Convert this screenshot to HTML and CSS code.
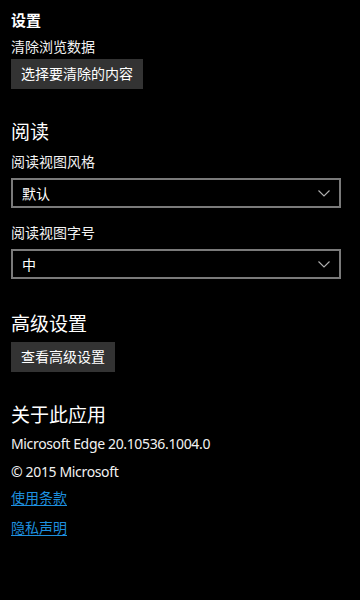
FILE: index.html
```html
<!DOCTYPE html>
<html lang="zh-CN">
<head>
<meta charset="utf-8">
<title>设置</title>
<link rel="stylesheet" href="styles.css">
</head>
<body>
<main class="page">
  <div class="title">设置</div>
  <div class="label first">清除浏览数据</div>
  <button class="btn">选择要清除的内容</button>

  <h2 class="heading">阅读</h2>
  <div class="label">阅读视图风格</div>
  <div class="select">
    <span>默认</span>
    <svg class="chev" width="12" height="7" viewBox="0 0 12 7"><path d="M0.5 0.5 L6 6 L11.5 0.5" fill="none" stroke="#b0b0b0" stroke-width="1.1"/></svg>
  </div>
  <div class="label second">阅读视图字号</div>
  <div class="select">
    <span>中</span>
    <svg class="chev" width="12" height="7" viewBox="0 0 12 7"><path d="M0.5 0.5 L6 6 L11.5 0.5" fill="none" stroke="#b0b0b0" stroke-width="1.1"/></svg>
  </div>

  <h2 class="heading after-select">高级设置</h2>
  <button class="btn btn-small">查看高级设置</button>

  <h2 class="heading">关于此应用</h2>
  <div class="info first-info">Microsoft Edge 20.10536.1004.0</div>
  <div class="info">© 2015 Microsoft</div>
  <a class="link first-link" href="#">使用条款</a>
  <a class="link" href="#">隐私声明</a>
</main>
</body>
</html>
```

FILE: styles.css
```css
html, body {
  margin: 0;
  padding: 0;
  background: #000;
}

body {
  color: #fff;
  font-family: "Noto Sans", "Noto Sans CJK SC", sans-serif;
  font-size: 14px;
  width: 360px;
  height: 600px;
  overflow: hidden;
}

.page {
  display: flex;
  flex-direction: column;
  align-items: flex-start;
  padding: 10px 19px 0 11px;
}

.title {
  font-size: 15px;
  font-weight: 700;
  line-height: 20px;
}

.label {
  font-size: 14px;
  line-height: 20px;
  margin-top: 7px;
  color: #f2f2f2;
}

.label.second {
  margin-top: 15px;
}

.btn {
  margin-top: 2px;
  height: 30px;
  padding: 0 10px;
  border: 0;
  background: #333;
  color: #fff;
  font-family: inherit;
  font-size: 14px;
  line-height: 30px;
}

.btn-small {
  margin-top: 5px;
}

.heading {
  margin: 30px 0 0;
  font-size: 19px;
  font-weight: 400;
  line-height: 26px;
}

.heading.after-select {
  margin-top: 32px;
}

.select {
  margin-top: 6px;
  box-sizing: border-box;
  width: 330px;
  height: 30px;
  border: 2px solid #7a7a7a;
  padding: 0 9px;
  display: flex;
  align-items: center;
  justify-content: space-between;
  font-size: 14px;
}

.chev {
  display: block;
}

.info {
  line-height: 20px;
  margin-top: 8px;
  color: #f2f2f2;
  letter-spacing: -0.35px;
}

.info.first-info {
  margin-top: 6px;
}

.link {
  margin-top: 10px;
  line-height: 20px;
  color: #1e8fdf;
  text-decoration: underline;
  text-underline-offset: 2px;
}

.link.first-link {
  margin-top: 6px;
}
```
